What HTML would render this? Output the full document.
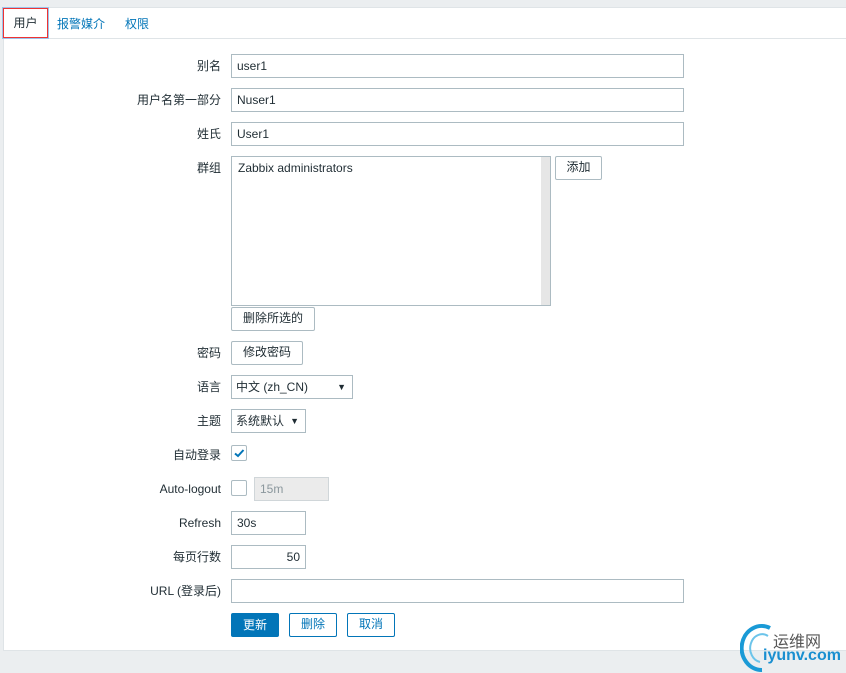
<!DOCTYPE html>
<html><head><meta charset="utf-8"><style>
*{box-sizing:border-box;margin:0;padding:0}
body{width:846px;height:673px;background:#ebeef0;font-family:"Liberation Sans","Noto Sans CJK SC",sans-serif;font-size:12px;color:#1f2c33;position:relative;overflow:hidden}
.panel{position:absolute;left:3px;top:7px;width:843px;height:644px;background:#fff;border:1px solid #dfe4e7;border-right:none}
.a{position:absolute}
.tabbar{position:absolute;left:3px;top:38px;width:843px;height:1px;background:#dfe4e7}
.lbl{position:absolute;right:625px;text-align:right;white-space:nowrap;line-height:16px}
.in{position:absolute;border:1px solid #acbbc2;background:#fff;padding:0 5px;line-height:22px;height:24px}
.btn{position:absolute;border:1px solid #acbbc2;border-radius:2px;background:#fff;text-align:center;line-height:21px;height:24px}
.btn2{position:absolute;border:1px solid #0275b8;border-radius:2px;background:#fff;color:#0275b8;text-align:center;line-height:21px;height:24px}
.cb{position:absolute;width:16px;height:16px;border:1px solid #acbbc2;border-radius:2px;background:#fff}
.arr{position:absolute;right:6px;top:6px;font-size:9px;line-height:10px}
</style></head><body>
<div class="panel"></div>
<div class="tabbar"></div>
<div class="a" style="left:3px;top:8px;width:45px;height:30px;border:1px solid #e33;box-shadow:0 0 0 1px #9cc3ea;background:#fff;line-height:28px;text-align:center">用户</div>
<div class="a" style="left:57px;top:15px;color:#0275b8">报警媒介</div>
<div class="a" style="left:125px;top:15px;color:#0275b8">权限</div>

<div class="lbl" style="top:58px">别名</div><div class="in" style="left:231px;top:54px;width:453px">user1</div>
<div class="lbl" style="top:92px">用户名第一部分</div><div class="in" style="left:231px;top:88px;width:453px">Nuser1</div>
<div class="lbl" style="top:126px">姓氏</div><div class="in" style="left:231px;top:122px;width:453px">User1</div>
<div class="lbl" style="top:160px">群组</div>
<div class="a" style="left:231px;top:156px;width:320px;height:150px;border:1px solid #acbbc2;padding:4px 6px">Zabbix administrators<div class="a" style="right:0;top:0;width:9px;height:148px;background:#e6e6e6"></div></div>
<div class="btn" style="left:555px;top:156px;width:47px">添加</div>
<div class="btn" style="left:231px;top:307px;width:84px">删除所选的</div>
<div class="lbl" style="top:345px">密码</div><div class="btn" style="left:231px;top:341px;width:72px">修改密码</div>
<div class="lbl" style="top:379px">语言</div><div class="in" style="left:231px;top:375px;width:122px;padding-left:4px">中文 (zh_CN)<span class="arr">▼</span></div>
<div class="lbl" style="top:413px">主题</div><div class="in" style="left:231px;top:409px;width:75px;padding-left:4px">系统默认<span class="arr">▼</span></div>
<div class="lbl" style="top:447px">自动登录</div><div class="cb" style="left:231px;top:445px"><svg width="14" height="14" style="position:absolute;left:0;top:0"><path d="M3 7.5L6 10L11.5 4" stroke="#0275b8" stroke-width="2" fill="none"/></svg></div>
<div class="lbl" style="top:481px">Auto-logout</div><div class="cb" style="left:231px;top:480px"></div>
<div class="in" style="left:254px;top:477px;width:75px;background:#ebebeb;border-color:#d0d6d9;color:#8b979d">15m</div>
<div class="lbl" style="top:515px">Refresh</div><div class="in" style="left:231px;top:511px;width:75px">30s</div>
<div class="lbl" style="top:549px">每页行数</div><div class="in" style="left:231px;top:545px;width:75px;text-align:right">50</div>
<div class="lbl" style="top:583px">URL (登录后)</div><div class="in" style="left:231px;top:579px;width:453px"></div>
<div class="a" style="left:231px;top:613px;width:48px;height:24px;background:#0275b8;color:#fff;border-radius:2px;text-align:center;line-height:24px">更新</div>
<div class="btn2" style="left:289px;top:613px;width:48px">删除</div>
<div class="btn2" style="left:347px;top:613px;width:48px">取消</div>
<svg class="a" style="left:740px;top:622px" width="40" height="50"><path d="M30 6 A20 22 0 1 0 22 48" stroke="#1a9ad6" stroke-width="4" fill="none"/><path d="M28 14 A12 14 0 1 0 20 40" stroke="#6cc4ea" stroke-width="2" fill="none"/></svg>
<div class="a" style="left:773px;top:628px;font-size:16px;color:#555">运维网</div>
<div class="a" style="left:763px;top:647px;font-size:16px;font-weight:bold;color:#1a8fd0">iyunv.com</div>
</body></html>
